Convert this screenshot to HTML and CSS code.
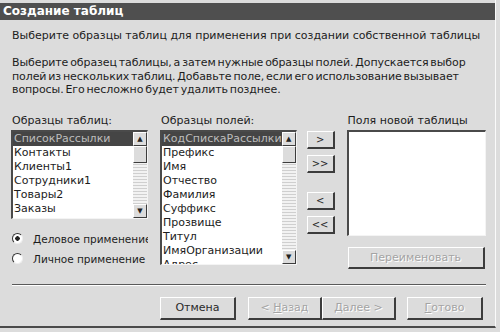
FILE: index.html
```html
<!DOCTYPE html>
<html lang="ru">
<head>
    <meta charset="UTF-8">
    <title>Создание таблиц</title>
    <link rel="stylesheet" href="styles.css">
</head>
<body>
    <div class="window">
        <div class="title">Создание таблиц</div>
        <div class="content">
            <p class="intro">Выберите образцы таблиц для применения при создании собственной таблицы</p>
            <p class="desc">Выберите образец таблицы, а затем нужные образцы полей. Допускается выбор полей из нескольких таблиц. Добавьте поле, если его использование вызывает вопросы. Его несложно будет удалить позднее.</p>

            <div class="columns">
                <div class="col col-tables">
                    <div class="label">Образцы таблиц:</div>
                    <div class="listbox list-tables">
                        <ul class="items">
                            <li class="selected">СписокРассылки</li>
                            <li>Контакты</li>
                            <li>Клиенты1</li>
                            <li>Сотрудники1</li>
                            <li>Товары2</li>
                            <li>Заказы</li>
                        </ul>
                        <div class="scrollbar">
                            <div class="sb-btn">&#9650;</div>
                            <div class="sb-thumb"></div>
                            <div class="sb-track"></div>
                            <div class="sb-btn">&#9660;</div>
                        </div>
                    </div>
                    <div class="radios">
                        <div class="radio"><span class="dot checked"></span>Деловое применение</div>
                        <div class="radio"><span class="dot"></span>Личное применение</div>
                    </div>
                </div>

                <div class="col col-fields">
                    <div class="label">Образцы полей:</div>
                    <div class="listbox list-fields">
                        <ul class="items">
                            <li class="selected">КодСпискаРассылки</li>
                            <li>Префикс</li>
                            <li>Имя</li>
                            <li>Отчество</li>
                            <li>Фамилия</li>
                            <li>Суффикс</li>
                            <li>Прозвище</li>
                            <li>Титул</li>
                            <li>ИмяОрганизации</li>
                            <li>Адрес</li>
                        </ul>
                        <div class="scrollbar">
                            <div class="sb-btn">&#9650;</div>
                            <div class="sb-thumb"></div>
                            <div class="sb-track"></div>
                            <div class="sb-btn">&#9660;</div>
                        </div>
                    </div>
                </div>

                <div class="col col-move">
                    <button class="btn small">&gt;</button>
                    <button class="btn small">&gt;&gt;</button>
                    <button class="btn small gap">&lt;</button>
                    <button class="btn small">&lt;&lt;</button>
                </div>

                <div class="col col-new">
                    <div class="label">Поля новой таблицы</div>
                    <div class="listbox list-new"></div>
                    <button class="btn disabled rename">Переименовать</button>
                </div>
            </div>

            <div class="separator"></div>

            <div class="footer">
                <button class="btn wide">Отмена</button>
                <div class="pair">
                    <button class="btn wide disabled">&lt; <u>Н</u>азад</button>
                    <button class="btn wide disabled"><u>Д</u>алее &gt;</button>
                </div>
                <button class="btn wide disabled"><u>Г</u>отово</button>
            </div>
        </div>
    </div>
</body>
</html>
```

FILE: styles.css
```css
body {
    margin: 0;
    background-color: #dcdcdc;
    font-family: "DejaVu Sans", "Liberation Sans", sans-serif;
    font-size: 11px;
    color: #1c1c1c;
}
.window {
    width: 496px;
    height: 328px;
    padding-top: 3px;
    border-right: 1px solid #fafafa;
    border-bottom: 2px solid #4a4a4a;
    background-color: #dcdcdc;
    box-sizing: border-box;
}
.title {
    height: 17px;
    line-height: 17px;
    padding-left: 3px;
    background-color: #4f4f4f;
    color: #fff;
    font-weight: bold;
    font-size: 12px;
}
.content {
    padding: 0 9px 0 11px;
}
.intro {
    margin: 9px 0 0 1px;
    line-height: 13px;
}
.desc {
    margin: 14px 0 0 1px;
    line-height: 13.5px;
    word-spacing: -1.5px;
    letter-spacing: -0.1px;
}
.columns {
    display: flex;
    margin-top: 17px;
    height: 156px;
}
.col {
    display: flex;
    flex-direction: column;
}
.label {
    height: 16px;
    line-height: 14px;
    padding-left: 1px;
}
.col-tables {
    width: 137px;
    margin-right: 12px;
}
.col-fields {
    width: 137px;
    margin-right: 10px;
}
.col-move {
    width: 28px;
    margin-right: 12px;
    padding-top: 17px;
}
.col-new {
    width: 140px;
}

/* listbox */
.listbox {
    display: flex;
    background-color: #fff;
    border-top: 2px solid #4a4a4a;
    border-left: 2px solid #4a4a4a;
    border-right: 1px solid #f4f4f4;
    border-bottom: 1px solid #f4f4f4;
    box-sizing: border-box;
    overflow: hidden;
}
.list-tables {
    height: 89px;
}
.list-fields {
    height: 135px;
}
.list-new {
    height: 106px;
}
.items {
    flex: 1;
    list-style: none;
    margin: 0;
    padding: 0;
    overflow: hidden;
    white-space: nowrap;
}
.items li {
    height: 14px;
    line-height: 14px;
    padding-left: 1px;
    font-size: 11px;
}
.items li.selected {
    background-color: #454545;
    color: #bdbdbd;
}
.scrollbar {
    width: 14px;
    display: flex;
    flex-direction: column;
    flex-shrink: 0;
}
.sb-btn, .sb-thumb {
    height: 14px;
    background-color: #dcdcdc;
    border-top: 1px solid #fff;
    border-left: 1px solid #fff;
    border-right: 1px solid #3c3c3c;
    border-bottom: 1px solid #3c3c3c;
    box-sizing: border-box;
    font-size: 7px;
    line-height: 12px;
    text-align: center;
    color: #222;
}
.sb-thumb {
    height: 17px;
}
.sb-track {
    flex: 1;
    background-color: #f2f2f2;
    background-image: radial-gradient(#cfcfcf 0.6px, transparent 0.8px);
    background-size: 2px 3px;
}

/* radios */
.radios {
    margin-top: 10px;
    white-space: nowrap;
    overflow: hidden;
}
.radio {
    height: 20px;
    line-height: 16px;
    display: flex;
    align-items: center;
    font-size: 10.5px;
}
.dot {
    width: 9px;
    height: 9px;
    margin: 0 10px 0 1px;
    border-radius: 50%;
    background-color: #fff;
    border-top: 1px solid #333;
    border-left: 1px solid #333;
    border-right: 1px solid #eee;
    border-bottom: 1px solid #eee;
    flex-shrink: 0;
}
.dot.checked {
    background-image: radial-gradient(#222 2px, transparent 2.5px);
}

/* buttons */
.btn {
    font-family: inherit;
    font-size: 11px;
    font-weight: normal;
    color: #2a2a2a;
    background-color: #dcdcdc;
    border-top: 1px solid #fff;
    border-left: 1px solid #fff;
    border-right: 2px solid #3c3c3c;
    border-bottom: 2px solid #3c3c3c;
    padding: 0;
    box-sizing: border-box;
}
.btn.small {
    width: 28px;
    height: 18px;
    margin-bottom: 6px;
    font-size: 10px;
}
.btn.small.gap {
    margin-top: 13px;
}
.btn.disabled {
    color: #a4a4a4;
    text-shadow: 1px 1px 0 #fff;
}
.rename {
    height: 22px;
    width: 137px;
    margin-top: 11px;
    margin-left: 1px;
}
.separator {
    margin: 14px 0 0 1px;
    width: 474px;
    border-top: 1px solid #5a5a5a;
    border-bottom: 1px solid #fff;
}
.footer {
    display: flex;
    margin-top: 11px;
    padding-left: 149px;
}
.btn.wide {
    width: 76px;
    height: 23px;
}
.pair {
    display: flex;
    margin-left: 12px;
    margin-right: 11px;
}
.pair .btn.wide {
    width: 74px;
}
u {
    text-decoration: underline;
}
```
